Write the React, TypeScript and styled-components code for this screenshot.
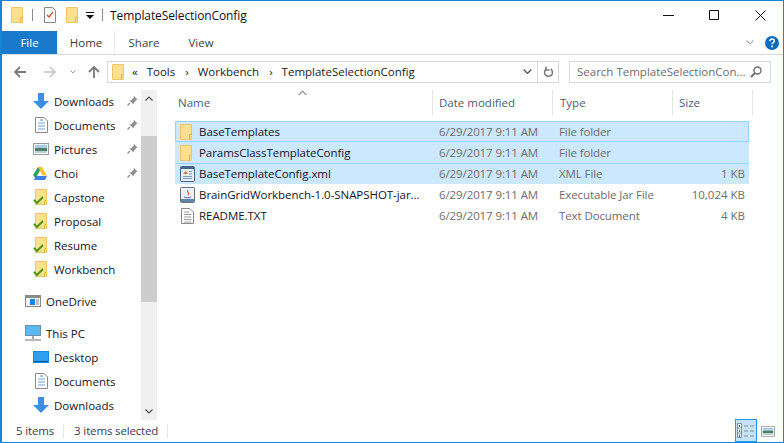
import React from "react";
import styled, { createGlobalStyle } from "styled-components";

const Global = createGlobalStyle`
  html, body { margin: 0; padding: 0; background: #fff; }
  body { font-family: "Open Sans", "Noto Sans", sans-serif; font-size: 11.5px; }
  * { box-sizing: border-box; }
`;

const Window = styled.div`
  width: 784px; height: 443px; border: 1px solid #1883d7; border-left-width: 2px;
  background: #fff; display: flex; flex-direction: column; overflow: hidden; color: #1a1a1a;
`;
const TitleBar = styled.div`
  height: 30px; display: flex; align-items: center; padding-left: 9px; padding-bottom: 2px; flex: none;
`;
const QuickSep = styled.span<{ $gap?: number }>`
  width: 1px; height: 12px; background: #8a8a8a; margin: 0 ${(p) => p.$gap ?? 9}px;
`;
const QuickIcon = styled.span<{ $ml?: number }>`
  display: flex; margin-left: ${(p) => p.$ml ?? 0}px;
`;
const TitleText = styled.span`
  margin-left: -1px; font-size: 12px; color: #111; letter-spacing: -0.1px;
`;
const WinControls = styled.div`
  margin-left: auto; display: flex; height: 28px;
`;
const WinButton = styled.div`
  width: 46px; display: flex; align-items: center; justify-content: center;
`;
const RibbonTabs = styled.div`
  height: 24px; display: flex; align-items: stretch; border-bottom: 1px solid #dadbdc; flex: none;
`;
const FileTab = styled.div`
  width: 55px; background: #1979ca; color: #fff; display: flex; align-items: center; justify-content: center;
`;
const Tab = styled.div<{ $w: number }>`
  width: ${(p) => p.$w}px; display: flex; align-items: center; justify-content: center; color: #444;
`;
const HomeTab = styled(Tab)`
  border: 1px solid #ececec; border-bottom: none; border-top: none; color: #3b3b3b;
`;
const RibbonRight = styled.div`
  margin-left: auto; display: flex; align-items: center; gap: 11px; padding-right: 4px;
`;
const AddressRow = styled.div`
  height: 33px; display: flex; align-items: center; flex: none; padding-left: 11px;
`;
const NavBtn = styled.span<{ $ml: number }>`
  display: flex; margin-left: ${(p) => p.$ml}px;
`;
const AddressBox = styled.div`
  margin-left: 7px; width: 452px; height: 22px; border: 1px solid #d9d9d9; display: flex; align-items: center; padding-left: 4px;
`;
const Crumb = styled.span<{ $ml: number }>`
  margin-left: ${(p) => p.$ml}px; color: #1a1a1a; white-space: nowrap;
`;
const AddressEnd = styled.div`
  margin-left: auto; display: flex; align-items: center; height: 100%;
`;
const RefreshCell = styled.div`
  width: 21px; height: 100%; border-left: 1px solid #d9d9d9; display: flex; align-items: center; justify-content: center;
`;
const ChevCell = styled.div`
  width: 20px; display: flex; align-items: center; justify-content: center;
`;
const SearchBox = styled.div`
  margin-left: 10px; width: 202px; height: 22px; border: 1px solid #d9d9d9; display: flex; align-items: center;
  padding: 0 8px 0 7px; color: #6d6d6d; justify-content: space-between;
`;
const Main = styled.div`
  flex: 1; display: flex; min-height: 0; padding-top: 2px;
`;
const NavPane = styled.div`
  width: 139px; flex: none; display: flex; flex-direction: column; margin-top: -1px;
`;
const NavRow = styled.div<{ $indent?: boolean; $gap?: number }>`
  height: 24px; flex: none; display: flex; align-items: center; position: relative;
  padding-left: ${(p) => (p.$indent ? 31 : 23)}px;
  margin-top: ${(p) => p.$gap ?? 0}px; color: #14142a;
`;
const NavIcon = styled.span`
  width: 21px; display: flex; justify-content: flex-start; flex: none;
`;
const PinSpot = styled.span`
  position: absolute; left: 125px; top: 6px; display: flex;
`;
const Scrollbar = styled.div`
  width: 16px; height: 330px; background: #f0f0f0; flex: none; display: flex; flex-direction: column; align-items: stretch;
`;
const ScrollBtn = styled.div`
  height: 17px; display: flex; align-items: center; justify-content: center; flex: none;
`;
const ScrollThumb = styled.div`
  height: 166px; margin-top: 29px; background: #cdcdcd; flex: none;
`;
const ScrollFill = styled.div`
  flex: 1;
`;
const FilePane = styled.div`
  flex: 1; padding-left: 18px; display: flex; flex-direction: column; position: relative;
`;
const Header = styled.div`
  height: 25px; display: grid; grid-template-columns: 259px 120px 120px 80px; width: 579px; margin-left: -1px; flex: none;
`;
const HeadCell = styled.div<{ $pad: number }>`
  display: flex; align-items: center; padding-left: ${(p) => p.$pad}px; color: #4c607a; border-right: 1px solid #e5e5e5;
`;
const SortArrow = styled.span`
  position: absolute; left: 141px; top: 0; display: flex;
`;
const Rows = styled.div`
  margin-top: 6px; display: flex; flex-direction: column; width: 574px;
`;
const Row = styled.div<{ $sel?: boolean; $focus?: boolean; $top?: boolean }>`
  height: 21px; display: grid; grid-template-columns: 257px 120px 120px 77px; align-items: center;
  background: ${(p) => (p.$sel ? "#cce8ff" : "transparent")};
  box-shadow: ${(p) => (p.$focus ? "inset 0 0 0 1px #99d1ff" : p.$top ? "inset 0 1px 0 #99d1ff" : "none")};
`;
const NameCell = styled.div`
  display: flex; align-items: center; padding-left: 5px; color: #14142a; white-space: nowrap; overflow: hidden; letter-spacing: -0.05px;
`;
const RowIcon = styled.span`
  width: 19px; display: flex; flex: none;
`;
const DimCell = styled.div`
  padding-left: 7px; color: #6d6d6d; white-space: nowrap; letter-spacing: -0.1px;
`;
const SizeCell = styled.div`
  text-align: right; padding-right: 4px; color: #6d6d6d;
`;
const StatusBar = styled.div`
  height: 22px; flex: none; display: flex; align-items: center; padding-left: 14px; color: #3c3c54; position: relative; letter-spacing: -0.15px;
`;
const StatusSep = styled.span<{ $ml: number }>`
  width: 1px; height: 14px; background: #e5e5e5; margin-left: ${(p) => p.$ml}px;
`;
const StatusText = styled.span<{ $ml?: number }>`
  margin-left: ${(p) => p.$ml ?? 0}px; white-space: nowrap; padding-bottom: 2px;
`;
const ViewButtons = styled.div`
  margin-left: auto; display: flex; align-items: center; gap: 4px; padding-right: 8px; height: 100%;
`;
const ViewActive = styled.div`
  width: 22px; height: 23px; background: #c5e3f6; border: 1px solid #1e9be3; display: flex; align-items: center; justify-content: center; margin-top: -1px;
`;

const Folder = () => (
  <svg width="12" height="16" viewBox="0 0 12 16">
    <path d="M.5.500h11v15H.5z" fill="#fde08f" stroke="#eec668" />
    <path d="M9.500 15.500v-5h2" fill="none" stroke="#e3b653" />
  </svg>
);
const CheckFolder = () => (
  <svg width="17" height="16" viewBox="0 0 17 16">
    <path d="M2.500.500h11v15h-11z" fill="#fde08f" stroke="#eec668" />
    <path d="M11.500 15.500v-4h2" fill="none" stroke="#e3b653" />
    <path d="M1 11l3 3 6-6" fill="none" stroke="#4f9a1f" strokeWidth="2.200" />
  </svg>
);
const Notes = () => (
  <svg width="12" height="16" viewBox="0 0 12 16">
    <path d="M.5.500h8l3 3v12H.5z" fill="#fff" stroke="#8a8a8a" />
    <path d="M3 8l2 2 4-5" fill="none" stroke="#d8502a" strokeWidth="1.300" />
  </svg>
);
const DropMark = () => (
  <svg width="8" height="7" viewBox="0 0 8 7">
    <path d="M0 0h8v1H0zM0 3h8L4 7z" fill="#111" />
  </svg>
);
const Min = () => (
  <svg width="11" height="1"><path d="M0 .5h11" stroke="#111" /></svg>
);
const Max = () => (
  <svg width="10" height="10"><path d="M.5.500h9v9h-9z" fill="none" stroke="#111" /></svg>
);
const Close = () => (
  <svg width="11" height="11" viewBox="0 0 11 11"><path d="M.5.500l10 10M10.500.500l-10 10" stroke="#111" /></svg>
);
const Chevron = ({ up, color = "#8a8a8a", w = 8 }: { up?: boolean; color?: string; w?: number }) => (
  <svg width={w} height={w / 2 + 1} viewBox="0 0 8 5">
    <path d={up ? "M.5 4.500L4 1l3.500 3.500" : "M.5.500L4 4 7.500.500"} fill="none" stroke={color} strokeWidth="1.200" />
  </svg>
);
const Help = () => (
  <svg width="14" height="14" viewBox="0 0 14 14">
    <circle cx="7" cy="7" r="7" fill="#0f6cbd" />
    <path d="M4.800 5.200c0-1.300 1-2.100 2.300-2.100s2.200.8 2.200 1.900c0 1.700-2.200 1.700-2.200 3.300" fill="none" stroke="#fff" strokeWidth="1.500" />
    <rect x="6.200" y="9.500" width="1.700" height="1.700" fill="#fff" />
  </svg>
);
const Arrow = ({ d, color }: { d: "l" | "r" | "u"; color: string }) => {
  const paths = {
    l: "M1 6h11M6 1L1 6l5 5",
    r: "M0 6h11M6 1l5 5-5 5",
    u: "M6 12V1M1 6l5-5 5 5",
  };
  return (
    <svg width="12" height="12" viewBox="0 0 12 12">
      <path d={paths[d]} fill="none" stroke={color} strokeWidth="1.800" />
    </svg>
  );
};
const Refresh = () => (
  <svg width="11" height="12" viewBox="0 0 11 12">
    <path d="M7.700 3a4 4 0 1 1-4.400 0" fill="none" stroke="#7a7a7a" strokeWidth="1.500" />
    <path d="M3 .500v3.500h3.500" fill="none" stroke="#7a7a7a" strokeWidth="1.500" />
  </svg>
);
const Search = () => (
  <svg width="12" height="12" viewBox="0 0 12 12">
    <circle cx="7.500" cy="4.500" r="3.500" fill="none" stroke="#6f6f6f" strokeWidth="1.400" />
    <path d="M5 7l-4 4" stroke="#6f6f6f" strokeWidth="2" />
  </svg>
);
const Pin = () => (
  <svg width="11" height="11" viewBox="0 0 11 11">
    <path d="M6.500.500l4 4-1.200.6-2.300 2.400-.4 2-4.100-4.100 2-.4 2.400-2.300z" fill="#8d8d8d" />
    <path d="M3 8l-2.500 2.500" stroke="#8d8d8d" strokeWidth="1.200" />
  </svg>
);
const Download = () => (
  <svg width="16" height="16" viewBox="0 0 16 16">
    <path d="M5 0h6v8h5l-8 8-8-8h5z" fill="#3f8fe0" />
  </svg>
);
const Doc = () => (
  <svg width="13" height="16" viewBox="0 0 13 16" style={{ marginLeft: 2 }}>
    <path d="M.5.500h8.500l3.500 3.500v11.500H.5z" fill="#fff" stroke="#8a8a8a" />
    <path d="M3 6h7M3 9h7M3 12h7" stroke="#6aa3d8" />
    <path d="M5 3h3" stroke="#3f8fe0" />
  </svg>
);
const Picture = ({ w = 16, h = 12 }: { w?: number; h?: number }) => (
  <svg width={w} height={h} viewBox="0 0 16 12">
    <rect x=".5" y=".5" width="15" height="11" fill="#fff" stroke="#9a9a9a" />
    <rect x="2" y="2" width="12" height="3" fill="#a9cbe6" />
    <rect x="2" y="5" width="12" height="3" fill="#4f7f68" />
    <rect x="2" y="8" width="12" height="2" fill="#b5d0d6" />
  </svg>
);
const Drive = () => (
  <svg width="14" height="13" viewBox="0 0 14 13">
    <path d="M5 0h4l-4.500 8-2 3.600L0 8z" fill="#2da160" />
    <path d="M5 0h4l5 8.500H9.800z" fill="#f6c12f" />
    <path d="M3 9h11l-2 4H1z" fill="#3f7fe8" />
  </svg>
);
const OneDriveIcon = () => (
  <svg width="16" height="12" viewBox="0 0 16 12">
    <rect x=".5" y=".5" width="15" height="11" fill="#f4f4f4" stroke="#8a8a8a" />
    <rect x="1" y="1" width="14" height="2" fill="#8a8a8a" />
    <rect x="5" y="4" width="5" height="6" fill="#1f7fdc" />
    <path d="M11 5h3M11 7h3M11 9h3" stroke="#8a8a8a" />
  </svg>
);
const ThisPC = () => (
  <svg width="16" height="16" viewBox="0 0 16 16">
    <rect x=".5" y=".5" width="15" height="10" fill="#5cb8f2" stroke="#6f8fa8" />
    <rect x="7" y="11" width="2" height="3" fill="#a8a8a8" />
    <rect x="0" y="14" width="16" height="2" fill="#b8b8c0" />
  </svg>
);
const Desktop = () => (
  <svg width="16" height="12" viewBox="0 0 16 12">
    <rect width="16" height="12" fill="#1489e4" />
    <rect x="1" y="1" width="14" height="9" fill="#2e9fee" />
    <rect x="1" y="10" width="14" height="1" fill="#0c5a98" />
  </svg>
);
const XmlIcon = () => (
  <svg width="15" height="16" viewBox="0 0 15 16">
    <rect x=".5" y=".5" width="14" height="15" rx="1" fill="#e6eef6" stroke="#44688c" />
    <rect x="1" y="1" width="13" height="2" fill="#44688c" />
    <path d="M3 8l2.500-3L8 8z" fill="#e2772e" />
    <path d="M9 5.500h3M9 8h3M3 10.500h9M3 12.500h9" stroke="#7a9ab8" />
  </svg>
);
const JarIcon = () => (
  <svg width="15" height="16" viewBox="0 0 15 16">
    <rect x=".5" y=".5" width="14" height="15" rx="1" fill="#eef1f5" stroke="#6a6f78" />
    <rect x="1" y="12" width="13" height="3" fill="#5f87ad" />
    <path d="M8 3c-2 2 2 3 0 5" fill="none" stroke="#e2602e" strokeWidth="1.300" />
    <path d="M4 10c2 1 5 1 7 0" fill="none" stroke="#3f6a9a" />
  </svg>
);
const TextIcon = () => (
  <svg width="13" height="16" viewBox="0 0 13 16" style={{ marginLeft: 1 }}>
    <path d="M.5.500h8.500l3.500 3.500v11.500H.5z" fill="#fff" stroke="#8a8a8a" />
    <path d="M3 4h5M3 6.500h7M3 9h7M3 11.500h7M3 14h7" stroke="#9a9a9a" />
  </svg>
);
const DetailsIcon = () => (
  <svg width="18" height="15" viewBox="0 0 18 15">
    <path d="M.5.500h4v14h-4z" fill="#fff" stroke="#8a8a8a" />
    <path d="M.5 5h4M.5 10h4" stroke="#8a8a8a" />
    <rect x="2" y="2" width="1" height="2" fill="#555" />
    <rect x="2" y="7" width="1" height="2" fill="#555" />
    <rect x="2" y="12" width="1" height="2" fill="#c8202a" />
    <path d="M7 3h4M13 3h4M7 8h4M13 8h4M7 13h4M13 13h4" stroke="#8a8a8a" />
  </svg>
);

const nav: { label: string; icon: React.ReactNode; pin?: boolean; top?: boolean; gap?: number }[] = [
  { label: "Downloads", icon: <Download />, pin: true },
  { label: "Documents", icon: <Doc />, pin: true },
  { label: "Pictures", icon: <Picture />, pin: true },
  { label: "Choi", icon: <Drive />, pin: true },
  { label: "Capstone", icon: <CheckFolder /> },
  { label: "Proposal", icon: <CheckFolder /> },
  { label: "Resume", icon: <CheckFolder /> },
  { label: "Workbench", icon: <CheckFolder /> },
  { label: "OneDrive", icon: <OneDriveIcon />, top: true, gap: 8 },
  { label: "This PC", icon: <ThisPC />, top: true, gap: 8 },
  { label: "Desktop", icon: <Desktop /> },
  { label: "Documents", icon: <Doc /> },
  { label: "Downloads", icon: <Download /> },
];

const files = [
  { name: "BaseTemplates", icon: <Folder />, type: "File folder", size: "", sel: true, focus: true },
  { name: "ParamsClassTemplateConfig", icon: <Folder />, type: "File folder", size: "", sel: true },
  { name: "BaseTemplateConfig.xml", icon: <XmlIcon />, type: "XML File", size: "1 KB", sel: true, top: true },
  { name: "BrainGridWorkbench-1.0-SNAPSHOT-jar...", icon: <JarIcon />, type: "Executable Jar File", size: "10,024 KB" },
  { name: "README.TXT", icon: <TextIcon />, type: "Text Document", size: "4 KB" },
];

export default function App() {
  return (
    <>
      <Global />
      <Window>
        <TitleBar>
          <QuickIcon><Folder /></QuickIcon>
          <QuickSep />
          <QuickIcon $ml={2}><Notes /></QuickIcon>
          <QuickIcon $ml={10}><Folder /></QuickIcon>
          <QuickIcon $ml={8}><DropMark /></QuickIcon>
          <QuickSep $gap={8} />
          <TitleText>TemplateSelectionConfig</TitleText>
          <WinControls>
            <WinButton><Min /></WinButton>
            <WinButton><Max /></WinButton>
            <WinButton><Close /></WinButton>
          </WinControls>
        </TitleBar>
        <RibbonTabs>
          <FileTab>File</FileTab>
          <HomeTab $w={58}>Home</HomeTab>
          <Tab $w={58}>Share</Tab>
          <Tab $w={56}>View</Tab>
          <RibbonRight>
            <Chevron color="#b0b0b0" w={8} />
            <Help />
          </RibbonRight>
        </RibbonTabs>
        <AddressRow>
          <NavBtn $ml={1}><Arrow d="l" color="#7a7a7a" /></NavBtn>
          <NavBtn $ml={18}><Arrow d="r" color="#cfcfcf" /></NavBtn>
          <NavBtn $ml={14}><Chevron color="#8a8a8a" w={6} /></NavBtn>
          <NavBtn $ml={12}><Arrow d="u" color="#7a7a7a" /></NavBtn>
          <AddressBox>
            <Folder />
            <Crumb $ml={8}>«</Crumb>
            <Crumb $ml={9}>Tools</Crumb>
            <Crumb $ml={10}>›</Crumb>
            <Crumb $ml={9}>Workbench</Crumb>
            <Crumb $ml={10}>›</Crumb>
            <Crumb $ml={9}>TemplateSelectionConfig</Crumb>
            <AddressEnd>
              <ChevCell><Chevron color="#555" w={9} /></ChevCell>
              <RefreshCell><Refresh /></RefreshCell>
            </AddressEnd>
          </AddressBox>
          <SearchBox>
            <span>Search TemplateSelectionCon...</span>
            <Search />
          </SearchBox>
        </AddressRow>
        <Main>
          <NavPane>
            {nav.map((n, i) => (
              <NavRow key={i} $indent={!n.top} $gap={n.gap}>
                <NavIcon>{n.icon}</NavIcon>
                <span>{n.label}</span>
                {n.pin && <PinSpot><Pin /></PinSpot>}
              </NavRow>
            ))}
          </NavPane>
          <Scrollbar>
            <ScrollBtn><Chevron up color="#505050" w={8} /></ScrollBtn>
            <ScrollThumb />
            <ScrollFill />
            <ScrollBtn><Chevron color="#505050" w={8} /></ScrollBtn>
          </Scrollbar>
          <FilePane>
            <SortArrow><Chevron up color="#9a9a9a" w={9} /></SortArrow>
            <Header>
              <HeadCell $pad={4}>Name</HeadCell>
              <HeadCell $pad={6}>Date modified</HeadCell>
              <HeadCell $pad={7}>Type</HeadCell>
              <HeadCell $pad={6}>Size</HeadCell>
            </Header>
            <Rows>
              {files.map((f) => (
                <Row key={f.name} $sel={f.sel} $focus={f.focus} $top={f.top}>
                  <NameCell><RowIcon>{f.icon}</RowIcon>{f.name}</NameCell>
                  <DimCell>6/29/2017 9:11 AM</DimCell>
                  <DimCell>{f.type}</DimCell>
                  <SizeCell>{f.size}</SizeCell>
                </Row>
              ))}
            </Rows>
          </FilePane>
        </Main>
        <StatusBar>
          <StatusText>5 items</StatusText>
          <StatusSep $ml={9} />
          <StatusText $ml={10}>3 items selected</StatusText>
          <StatusSep $ml={9} />
          <ViewButtons>
            <ViewActive><DetailsIcon /></ViewActive>
            <Picture w={14} h={11} />
          </ViewButtons>
        </StatusBar>
      </Window>
    </>
  );
}
